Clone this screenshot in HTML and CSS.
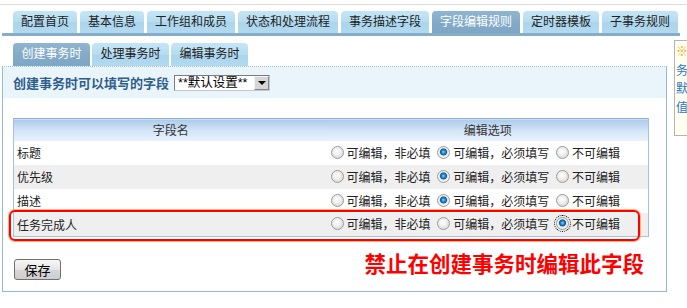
FILE: index.html
```html
<!DOCTYPE html>
<html lang="zh-CN">
<head>
    <meta charset="UTF-8">
    <title>字段编辑规则</title>
    <link rel="stylesheet" href="styles.css">
</head>
<body>
<div class="page">
    <div class="topline"></div>

    <!-- 主导航 -->
    <nav class="main-tabs">
        <a class="tab">配置首页</a>
        <a class="tab">基本信息</a>
        <a class="tab">工作组和成员</a>
        <a class="tab">状态和处理流程</a>
        <a class="tab">事务描述字段</a>
        <a class="tab on">字段编辑规则</a>
        <a class="tab">定时器模板</a>
        <a class="tab">子事务规则</a>
    </nav>

    <div class="body-row">
        <div class="content">
            <div class="sub-tabs">
                <a class="tab on">创建事务时</a>
                <a class="tab">处理事务时</a>
                <a class="tab">编辑事务时</a>
            </div>

            <section class="panel">
                <div class="panel-head">
                    <h2>创建事务时可以填写的字段</h2>
                    <span class="picker">
                        <select>
                            <option>**默认设置**</option>
                        </select>
                        <span class="arrow"></span>
                    </span>
                </div>

                <!-- 字段列表 -->
                <div class="grid-wrap">
                    <table class="grid">
                        <thead>
                            <tr><th>字段名</th><th>编辑选项</th></tr>
                        </thead>
                        <tbody>
                            <tr>
                                <td>标题</td>
                                <td class="opts">
                                    <label class="opt"><input type="radio" name="f1">可编辑，非必填</label>
                                    <label class="opt"><input type="radio" name="f1" checked>可编辑，必须填写</label>
                                    <label class="opt"><input type="radio" name="f1">不可编辑</label>
                                </td>
                            </tr>
                            <tr>
                                <td>优先级</td>
                                <td class="opts">
                                    <label class="opt"><input type="radio" name="f2">可编辑，非必填</label>
                                    <label class="opt"><input type="radio" name="f2" checked>可编辑，必须填写</label>
                                    <label class="opt"><input type="radio" name="f2">不可编辑</label>
                                </td>
                            </tr>
                            <tr>
                                <td>描述</td>
                                <td class="opts">
                                    <label class="opt"><input type="radio" name="f3">可编辑，非必填</label>
                                    <label class="opt"><input type="radio" name="f3" checked>可编辑，必须填写</label>
                                    <label class="opt"><input type="radio" name="f3">不可编辑</label>
                                </td>
                            </tr>
                            <tr>
                                <td>任务完成人</td>
                                <td class="opts">
                                    <label class="opt"><input type="radio" name="f4">可编辑，非必填</label>
                                    <label class="opt"><input type="radio" name="f4">可编辑，必须填写</label>
                                    <label class="opt"><input type="radio" name="f4" class="focus" checked>不可编辑</label>
                                </td>
                            </tr>
                        </tbody>
                    </table>
                    <div class="mark"></div>
                </div>

                <div class="actions">
                    <button class="save">保存</button>
                    <p class="warn">禁止在创建事务时编辑此字段</p>
                </div>
            </section>
        </div>

        <aside class="note">
            <div class="hint">※</div>
            <div>务</div>
            <div>默</div>
            <div>值</div>
        </aside>
    </div>
</div>
</body>
</html>
```

FILE: styles.css
```css
* {
    box-sizing: border-box;
}

body {
    margin: 0;
    font-family: "Liberation Sans", "Noto Sans CJK SC", sans-serif;
    font-size: 12px;
    color: #222;
    background: #fff;
    overflow: hidden;
}

.page {
    padding-top: 4px;
}

.topline {
    height: 1px;
    background: #dcdcdc;
    margin-bottom: 6px;
}

/* 标签页 */
.main-tabs {
    display: flex;
    gap: 3px;
    margin-left: 2px;
    width: 678px;
    padding-left: 11px;
    border-bottom: 3px solid #86adca;
}

.tab {
    display: block;
    height: 22px;
    line-height: 22px;
    padding: 0 8px;
    border-radius: 4px 4px 0 0;
    background: linear-gradient(#c4e5f6, #b6dcf0 50%, #aad5ed 52%, #b2daef);
    color: #222;
    white-space: nowrap;
}

.tab.on {
    background: linear-gradient(#8fb5d0, #84abc8 50%, #7ea7c5);
    color: #fff;
}

.body-row {
    display: flex;
    align-items: flex-start;
    margin-left: 2px;
}

.content {
    width: 665px;
    flex-shrink: 0;
}

.sub-tabs {
    display: flex;
    gap: 2px;
    margin-top: 7px;
    padding-left: 11px;
}

.sub-tabs .tab {
    height: 23px;
    line-height: 23px;
    padding: 0 8.5px;
}

/* 面板 */
.panel {
    border: 1px solid #93bbd0;
    border-top: 1px dotted #8fc3dc;
}

.panel-head {
    height: 31px;
    display: flex;
    align-items: center;
    gap: 5px;
    padding-left: 10px;
    background: #e9f5fb;
}

.panel-head h2 {
    margin: 0;
    font-size: 13px;
    font-weight: bold;
    color: #2f5e8c;
    font-family: "Noto Sans CJK SC", sans-serif;
}

.picker {
    display: inline-flex;
    width: 96px;
    height: 16px;
    border: 1px solid #7c7c7c;
    border-right-color: #c8c8c8;
    border-bottom-color: #c8c8c8;
    background: #fff;
}

.picker select {
    appearance: none;
    -webkit-appearance: none;
    width: 79px;
    height: 14px;
    border: 0;
    padding: 0 0 0 3px;
    background: transparent;
    font-family: "Liberation Sans", "Noto Sans CJK SC", sans-serif;
    font-size: 12.5px;
    line-height: 14px;
    color: #000;
}

.picker .arrow {
    width: 15px;
    height: 14px;
    display: flex;
    align-items: center;
    justify-content: center;
    border: 1px solid #888;
    border-top-color: #f4f4f4;
    border-left-color: #f4f4f4;
    background: #d6d6d6;
}

.picker .arrow::after {
    content: "";
    border-left: 4px solid transparent;
    border-right: 4px solid transparent;
    border-top: 4px solid #000;
}

/* 字段表格 */
.grid-wrap {
    position: relative;
    width: 636px;
    margin: 20px 0 0 10px;
}

.grid {
    width: 100%;
    border-collapse: collapse;
    border: 1px solid #a2c4da;
    border-top-color: #8ab2d0;
}

.grid th {
    width: 50%;
    height: 22px;
    padding: 0;
    font-weight: normal;
    font-size: 12px;
    color: #333;
    font-family: "Noto Sans CJK SC", sans-serif;
    background: linear-gradient(#adcaeb, #d6e6f7 55%, #e8f2fc);
}

.grid td {
    height: 24px;
    padding: 0 3px;
    font-family: "Noto Sans CJK SC", sans-serif;
}

.grid tbody tr:nth-child(even) td {
    background: #efefef;
}

.grid td.opts {
    text-align: right;
    padding-right: 28px;
    white-space: nowrap;
}

.opt {
    display: inline-flex;
    align-items: center;
}

.opt + .opt {
    margin-left: 4px;
}

input[type=radio] {
    appearance: none;
    -webkit-appearance: none;
    width: 13px;
    height: 13px;
    margin: 0 3px 0 0;
    border-radius: 50%;
    border: 1px solid #9c9c9c;
    background: radial-gradient(circle at 45% 40%, #fff 0, #f2f2f2 35%, #cdcdcd 100%);
}

input[type=radio]:checked {
    background: radial-gradient(circle at 50% 45%, #8ad8ff 0, #1d88cc 1.8px, #0a5e9c 3.2px, #d8d8d8 3.8px, #f6f6f6 5px, #cdcdcd 100%);
}

input.focus {
    outline: 1px dotted #000;
    outline-offset: 1px;
}

.mark {
    position: absolute;
    left: -4px;
    top: 92px;
    width: 631px;
    height: 31px;
    border: 2px solid #ff0000;
    border-radius: 6px;
    box-shadow: 0 0 0 1px #ffb27a;
}

/* 底部操作 */
.actions {
    display: flex;
    justify-content: space-between;
    align-items: flex-start;
    padding: 0 22px 11px 11px;
}

.save {
    margin-top: 22px;
    width: 47px;
    height: 21px;
    padding: 0;
    border: 1px solid #707070;
    border-radius: 3px;
    background: linear-gradient(#f6f6f6, #e6e6e6 50%, #d6d6d6 52%, #cfcfcf);
    font-family: "Noto Sans CJK SC", sans-serif;
    font-size: 13px;
    color: #000;
}

.warn {
    margin: 14px 0 0;
    font-family: "Noto Sans CJK SC", sans-serif;
    font-size: 21.5px;
    line-height: 24px;
    font-weight: bold;
    color: #f00;
}

/* 右侧提示 */
.note {
    flex-shrink: 0;
    width: 13px;
    height: 96px;
    margin: 4px 0 0 7px;
    padding: 1px 0 0 1px;
    border: 1px solid #b4b4b4;
    border-right: 0;
    background: #fffff0;
    font-family: "Noto Sans CJK SC", sans-serif;
    font-size: 12px;
    line-height: 18.5px;
    color: #2d76c9;
    overflow: hidden;
}

.note .hint {
    color: #f0a800;
}
```
